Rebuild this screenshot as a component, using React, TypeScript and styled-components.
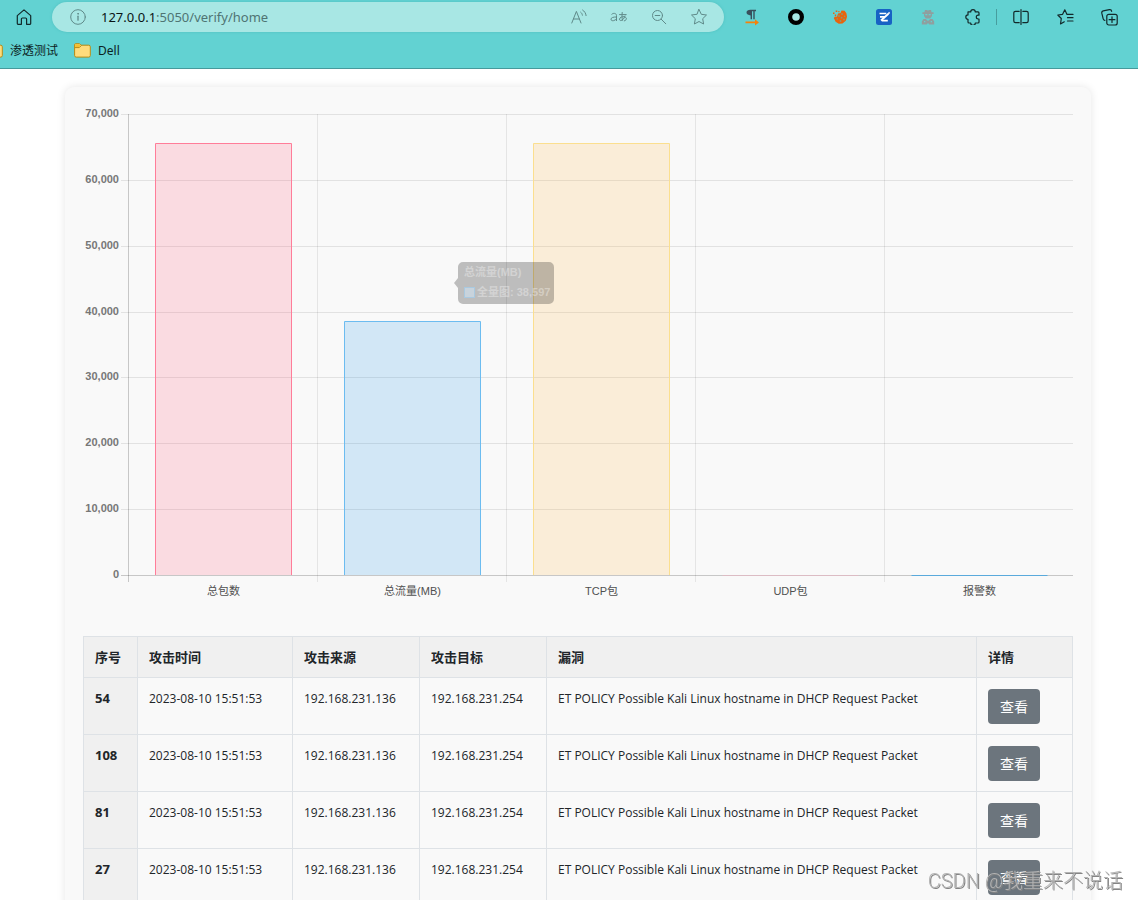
import React from "react";
import styled, { createGlobalStyle } from "styled-components";

const ui = `"Noto Sans", "Noto Sans CJK SC", sans-serif`;

const GlobalStyle = createGlobalStyle`
  *, *::before, *::after { box-sizing: border-box; }
  body { margin: 0; background: #fff; color: #212529; font-family: ${ui}; }
  button, input { font: inherit; }
`;

const Shell = styled.div`
  display: flex;
  flex-direction: column;
  height: 100vh;
  overflow: hidden;
`;

const BrowserChrome = styled.header`
  flex: none;
  background: #62d2d2;
  border-bottom: 1px solid #469a9c;
`;

const NavBar = styled.div`
  display: flex;
  align-items: center;
  height: 34px;
  padding: 0 20px 0 12px;
`;

const IconButton = styled.button<{ $tone?: string }>`
  display: grid;
  place-items: center;
  flex: none;
  width: 24px;
  height: 24px;
  padding: 0;
  border: 0;
  background: none;
  color: ${(p) => p.$tone ?? "#12292a"};
  svg { display: block; }
`;

const AddressBar = styled.form`
  display: flex;
  align-items: center;
  flex: 1;
  height: 30px;
  margin: 0 16px;
  padding: 0 13px 0 14px;
  border-radius: 15px;
  background: #a8e7e4;
  box-shadow: 0 0 3px #4fbfbf;
`;

const Url = styled.a`
  flex: 1;
  margin-left: 11px;
  font-size: 13px;
  line-height: 20px;
  color: #4f7473;
  text-decoration: none;
  span { color: #0a1414; }
`;

const AddressTools = styled.div`
  display: flex;
  gap: 16px;
`;

const Extensions = styled.div`
  display: flex;
  gap: 20px;
`;

const Divider = styled.span`
  width: 1px;
  height: 16px;
  margin: 0 12px;
  background: #479d9e;
`;

const WindowTools = styled.div`
  display: flex;
  gap: 20px;
  margin-right: -3px;
`;

const Bookmarks = styled.nav`
  display: flex;
  align-items: center;
  gap: 16px;
  height: 34px;
  padding-bottom: 1px;
  margin-left: -14px;
`;

const Bookmark = styled.a`
  display: flex;
  align-items: center;
  gap: 7px;
  font-size: 12px;
  line-height: 16px;
  color: #0c2222;
  text-decoration: none;
`;

const Page = styled.main`
  flex: 1;
  min-height: 0;
  overflow-y: auto;
  scrollbar-width: none;
  padding: 18px 47px 18px 65px;
`;

const Card = styled.section`
  padding: 18px;
  border-radius: 9px;
  background: #f9f9f9;
  box-shadow: 0 0 9px rgba(0, 0, 0, 0.1);
`;

const Chart = styled.svg`
  display: block;
  width: 100%;
  height: auto;
  margin-bottom: 36px;
  font: 11px "Liberation Sans", "Noto Sans CJK SC", sans-serif;
`;

const Table = styled.table`
  width: 100%;
  table-layout: fixed;
  border-collapse: collapse;
  font-family: "Open Sans", "Noto Sans CJK SC", sans-serif;
  font-size: 12px;
  line-height: 19px;
`;

const Col = styled.col<{ $w?: number }>`
  width: ${(p) => (p.$w ? `${p.$w}px` : "auto")};
`;

const cell = `
  padding: 11px 11px 10px;
  border: 1px solid #dee2e6;
  text-align: left;
  vertical-align: top;
`;

const Th = styled.th`
  ${cell}
  font-size: 13px;
  background: #f0f0f0;
`;

const Td = styled.td`
  ${cell}
`;

const ViewButton = styled.button`
  display: block;
  height: 35px;
  padding: 0 12px;
  border: 0;
  border-radius: 4px;
  background: #6c757d;
  color: #fff;
  font-size: 14px;
  line-height: 20px;
`;

const Watermark = styled.div`
  position: fixed;
  right: 15px;
  bottom: 4px;
  font: 300 20px/30px Roboto, "Noto Sans CJK SC", sans-serif;
  color: #b4b4b4;
  text-shadow: 1px 1px 0 #858585;
  pointer-events: none;
`;

const stroke = { fill: "none", stroke: "currentColor", strokeLinecap: "round", strokeLinejoin: "round" } as const;

const HomeIcon = () => (
  <svg width="16" height="16" viewBox="0 0 16 16" {...stroke} strokeWidth="1.2">
    <path d="M1.3 6.6 8 .9l6.7 5.7v8a.7.7 0 0 1-.7.7h-3.4V10a1 1 0 0 0-1-1H6.4a1 1 0 0 0-1 1v5.3H2a.7.7 0 0 1-.7-.7z" />
  </svg>
);
const InfoIcon = () => (
  <svg width="16" height="16" viewBox="0 0 16 16" {...stroke}>
    <circle cx="8" cy="8" r="7.3" />
    <path d="M8 7.2v4" strokeWidth="1.3" />
    <circle cx="8" cy="4.8" r=".4" />
  </svg>
);
const ReadIcon = () => (
  <svg width="16" height="16" viewBox="0 0 16 16" {...stroke}>
    <path d="M.8 14 5.4 2.4 10 14M2.5 10h5.8M9.7 3.2c1 .8 1.5 1.7 1.7 3M11.6 1c2 1.3 3.2 3.2 3.5 5.6" />
  </svg>
);
const ZoomOutIcon = () => (
  <svg width="16" height="16" viewBox="0 0 16 16" {...stroke}>
    <circle cx="6.5" cy="6.5" r="5" />
    <path d="M4.2 6.5h4.6M10.2 10.2l4.6 4.6" />
  </svg>
);
const StarIcon = () => (
  <svg width="18" height="18" viewBox="0 0 18 18" {...stroke}>
    <path d="m9 1.5 2.3 4.8 5.2.7-3.8 3.7.9 5.3L9 13.5 4.4 16l.9-5.3L1.5 7l5.2-.7z" />
  </svg>
);
const PilcrowIcon = () => (
  <svg width="16" height="17" viewBox="0 0 16 17">
    <path d="M12 .8v1.400h-1.300v8H9.300v-8H8v8H6.600V6.400C4.400 6.400 2.500 5.400 2.500 3.600S4.200.8 6.400.8z" fill="#38505c" />
    <path d="M1.500 12.600H11v-2.300l4 3.100-4 3.100v-2.200H1.500z" fill="#f5820b" />
  </svg>
);
const RingIcon = () => (
  <svg width="16" height="16" viewBox="0 0 16 16">
    <circle cx="8" cy="8" r="5.900" fill="#a8e7e4" stroke="#000" strokeWidth="4.200" />
  </svg>
);
const CookieIcon = () => (
  <svg width="16" height="16" viewBox="0 0 16 16">
    <path d="M6 4.500 8.500 4l1-2.400 3.100.2 1.800 2.500.6 3.500-1.200 4-3.300 2.700-3.700.2-3.200-2L1.800 9 3 7.500l2 .2z" fill="#e9640c" />
    <g fill="#8a9a78">
      <circle cx="7" cy="7" r=".9" /><circle cx="10" cy="5" r=".9" /><circle cx="12.600" cy="7.200" r=".8" />
      <circle cx="9.600" cy="8.700" r=".9" /><circle cx="12" cy="10.500" r=".9" /><circle cx="5.200" cy="10" r=".8" /><circle cx="8.500" cy="12" r=".9" />
    </g>
    <path d="M1 3.500h1.500V5H1zM3.700 1.600h1.600v1.500H3.700zM2.800 5.500h1.400v1.400H2.800zM6.300 2h1.200v1.200H6.300z" fill="#e9640c" />
  </svg>
);
const NoteIcon = () => (
  <svg width="16" height="16" viewBox="0 0 16 16">
    <rect width="16" height="16" rx="2.500" fill="#1762c4" />
    <path d="M3.500 4.500h6.800M4 7.800h5M5.800 11.600h6" stroke="#fff" strokeWidth="1.700" />
    <path d="m5 11.500 7.400-6.700" stroke="#fff" strokeWidth="1.900" />
    <path d="m12.300 4.700 1.300-1.300" stroke="#fff" strokeWidth="1.500" />
  </svg>
);
const SpyIcon = () => (
  <svg width="14" height="16" viewBox="0 0 14 16" fill="#8f9f9f">
    <path d="M4 1h2l1 .8L8 1h2l.6 2.300h2V5H11v2L9.200 9.500H4.800L3 7V5H1.400V3.300h2z" />
    <path d="M2.500 10h2.300L7 12l2.200-2h2.300l1.700 2.500v3H8.300L7 14l-1.300 1.500H.8v-3z" />
    <path d="M4.300 5h2v1.200h-2zM7.700 5h2v1.200h-2zM3 12h1.300v1.300H3zM9.700 12H11v1.300H9.700z" fill="#62d2d2" />
  </svg>
);
const PuzzleIcon = () => (
  <svg width="16" height="16" viewBox="-1 0 16 16" {...stroke} strokeWidth="1.200">
    <path d="M3 2.900h2.700a2.300 2.300 0 0 1 4.600 0H13a1 1 0 0 1 1 1v2.300h-.8a1.900 1.900 0 0 0 0 3.800h.8v3a1 1 0 0 1-1 1h-2.700a2.300 2.300 0 0 1-4.600 0H4a1 1 0 0 1-1-1v-2.700a2.200 2.200 0 0 1 0-4.400z" />
  </svg>
);
const SplitIcon = () => (
  <svg width="16" height="16" viewBox="0 0 16 16" {...stroke} strokeWidth="1.200">
    <path d="M6.200 2.300H2.500A1.700 1.700 0 0 0 .8 4v8a1.700 1.700 0 0 0 1.700 1.700h3.700M9.800 2.300h3.700A1.700 1.700 0 0 1 15.200 4v8a1.700 1.700 0 0 1-1.700 1.700H9.800M8 .6v14.800" />
  </svg>
);
const FavoritesIcon = () => (
  <svg width="17" height="16" viewBox="0 0 17 16" {...stroke} strokeWidth="1.200">
    <path d="M10 5.400 7.800.8 5.600 5.300.8 6l3.500 3.500L3.500 15l3.800-2.200M10 5.400h6M10.500 8.700H16M10.500 12H16" />
  </svg>
);
const CollectionsIcon = () => (
  <svg width="17" height="17" viewBox="0 0 17 17" {...stroke} strokeWidth="1.200">
    <rect x="5.800" y="5.300" width="10.400" height="10.700" rx="2" />
    <path d="M11 7.800v5.700M8.100 10.700h5.800M3.800 11.300A2 2 0 0 1 2.200 9.800L.8 4.200a2 2 0 0 1 1.400-2.300L8.400.7a2 2 0 0 1 2.300 1.600" />
  </svg>
);
const FolderIcon = () => (
  <svg width="17" height="15" viewBox="0 0 17 15">
    <path d="M1.500.7h4L7 2.200h7.700a1.600 1.600 0 0 1 1.600 1.600v8.700a1.600 1.600 0 0 1-1.600 1.600H2.200A1.600 1.600 0 0 1 .6 12.500V1.700a1 1 0 0 1 .9-1z" fill="#ffdc7c" stroke="#b88a13" />
    <path d="M1.100 1.200h4.200l1.300 1.500-1.400 1.600H1.100z" fill="#f5c02f" />
    <path d="M1 4.600h4.300l2-2" fill="none" stroke="#b88a13" />
  </svg>
);
const TranslateIcon = () => (
  <svg width="18" height="16" viewBox="0 0 18 16" {...stroke}>
    <path d="M1.800 5.200C3 3.800 6.500 3.900 6.500 6.600v5M6.500 8C3.300 7.900 1 8.500 1 10.300c0 2 3.500 2.100 5.500-.5M9.500 5.600h6.700M12.200 3.500c-.3 3-.3 5 .3 7.700M15 7c-.8 2.700-2.500 4.500-4.300 4.500-2.200 0-1.300-3.600 2-3.800 4-.3 5.300 3 1.600 4.200" />
  </svg>
);

const categories = [
  { label: "总包数", value: 65600, fill: "rgba(255,99,132,.2)", line: "#ff7d99" },
  { label: "总流量(MB)", value: 38597, fill: "rgba(54,162,235,.2)", line: "#6cbcf0" },
  { label: "TCP包", value: 65550, fill: "rgba(255,190,86,.2)", line: "#fbdf8f" },
  { label: "UDP包", value: 0, fill: "none", line: "#dcbcc4" },
  { label: "报警数", value: 0, fill: "none", line: "#5aaadc" },
];
const plot = { left: 45, top: 9, bottom: 470, step: 189 };
const yOf = (v: number) => Math.round(plot.bottom - (v / 70000) * (plot.bottom - plot.top));

function TrafficChart() {
  return (
    <Chart viewBox="0 0 990 495" role="img" aria-label="全量图">
      {[0, 1, 2, 3, 4, 5, 6, 7].map((n) => {
        const y = yOf(n * 10000);
        return (
          <g key={n}>
            <rect x={38} y={y} width={952} height={1} fill={n ? "rgba(0,0,0,.09)" : "rgba(0,0,0,.2)"} />
            <text x={36} y={y + 3} textAnchor="end" fontWeight="bold" fill="#777">{(n * 10000).toLocaleString("en-US")}</text>
          </g>
        );
      })}
      {categories.map((c, i) => (
        <rect key={c.label} x={plot.left + i * plot.step} y={plot.top} width={1} height={468} fill={i ? "rgba(0,0,0,.08)" : "rgba(0,0,0,.2)"} />
      ))}
      {categories.map((c, i) => {
        const x = plot.left + i * plot.step + 27.5;
        const y = yOf(c.value) + 0.5;
        return (
          <g key={c.label}>
            {c.value > 0 ? (
              <>
                <rect x={x} y={y} width={136} height={plot.bottom - y} fill={c.fill} />
                <path d={`M${x} ${plot.bottom}V${y}h136V${plot.bottom}`} fill="none" stroke={c.line} />
              </>
            ) : (
              <path d={`M${x} 470.5h136`} stroke={c.line} />
            )}
            <text x={plot.left + (i + 0.5) * plot.step + 1} y={490} textAnchor="middle" fill="#505050">{c.label}</text>
          </g>
        );
      })}
      <path d="M380 157h86a5 5 0 0 1 5 5v32a5 5 0 0 1-5 5h-86a5 5 0 0 1-5-5v-11l-4-5 4-5v-11a5 5 0 0 1 5-5z" fill="rgba(0,0,0,.24)" />
      <g fill="rgba(255,255,255,.35)" fontWeight="bold">
        <text x="381" y="171">总流量(MB)</text>
        <text x="394" y="191">全量图: 38,597</text>
      </g>
      <rect x="381.500" y="182.500" width="10" height="10" fill="#c8d3dc" stroke="#a9c9e0" />
    </Chart>
  );
}

const rows = [54, 108, 81, 27].map((id) => ({
  id,
  time: "2023-08-10 15:51:53",
  source: "192.168.231.136",
  target: "192.168.231.254",
  threat: "ET POLICY Possible Kali Linux hostname in DHCP Request Packet",
}));

export default function App() {
  const muted = "#5f8a89";
  return (
    <Shell>
      <GlobalStyle />
      <BrowserChrome>
        <NavBar>
          <IconButton aria-label="主页"><HomeIcon /></IconButton>
          <AddressBar>
            <IconButton type="button" $tone={muted} aria-label="网站信息"><InfoIcon /></IconButton>
            <Url href="#"><span>127.0.0.1</span>:5050/verify/home</Url>
            <AddressTools>
              <IconButton type="button" $tone={muted} aria-label="朗读"><ReadIcon /></IconButton>
              <IconButton type="button" $tone={muted} aria-label="翻译"><TranslateIcon /></IconButton>
              <IconButton type="button" $tone={muted} aria-label="缩小"><ZoomOutIcon /></IconButton>
              <IconButton type="button" $tone={muted} aria-label="收藏"><StarIcon /></IconButton>
            </AddressTools>
          </AddressBar>
          <Extensions>
            <IconButton aria-label="段落"><PilcrowIcon /></IconButton>
            <IconButton aria-label="圆环"><RingIcon /></IconButton>
            <IconButton aria-label="Cookie"><CookieIcon /></IconButton>
            <IconButton aria-label="笔记"><NoteIcon /></IconButton>
            <IconButton aria-label="代理"><SpyIcon /></IconButton>
            <IconButton aria-label="扩展"><PuzzleIcon /></IconButton>
          </Extensions>
          <Divider />
          <WindowTools>
            <IconButton aria-label="拆分屏幕"><SplitIcon /></IconButton>
            <IconButton aria-label="收藏夹"><FavoritesIcon /></IconButton>
            <IconButton aria-label="集锦"><CollectionsIcon /></IconButton>
          </WindowTools>
        </NavBar>
        <Bookmarks>
          <Bookmark href="#"><FolderIcon />渗透测试</Bookmark>
          <Bookmark href="#"><FolderIcon />Dell</Bookmark>
        </Bookmarks>
      </BrowserChrome>
      <Page>
        <Card>
          <TrafficChart />
          <Table>
            <colgroup>
              <Col $w={54} /><Col $w={155} /><Col $w={127} /><Col $w={127} /><Col /><Col $w={96} />
            </colgroup>
            <thead>
              <tr>
                {["序号", "攻击时间", "攻击来源", "攻击目标", "漏洞", "详情"].map((h) => (
                  <Th key={h} scope="col">{h}</Th>
                ))}
              </tr>
            </thead>
            <tbody>
              {rows.map((r) => (
                <tr key={r.id}>
                  <Th scope="row">{r.id}</Th>
                  <Td>{r.time}</Td>
                  <Td>{r.source}</Td>
                  <Td>{r.target}</Td>
                  <Td>{r.threat}</Td>
                  <Td><ViewButton>查看</ViewButton></Td>
                </tr>
              ))}
            </tbody>
          </Table>
        </Card>
      </Page>
      <Watermark>CSDN @我重来不说话</Watermark>
    </Shell>
  );
}
